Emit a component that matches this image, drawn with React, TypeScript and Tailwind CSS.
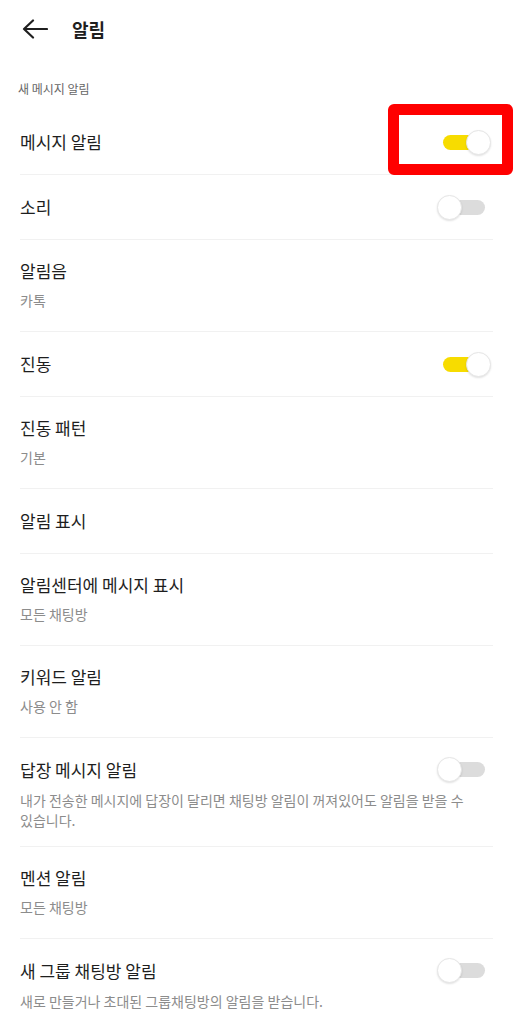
import React from "react";

type Row = {
  title: string;
  sub?: string;
  desc?: string;
  toggle?: "on" | "off";
};

const rows: Row[] = [
  { title: "메시지 알림", toggle: "on" },
  { title: "소리", toggle: "off" },
  { title: "알림음", sub: "카톡" },
  { title: "진동", toggle: "on" },
  { title: "진동 패턴", sub: "기본" },
  { title: "알림 표시" },
  { title: "알림센터에 메시지 표시", sub: "모든 채팅방" },
  { title: "키워드 알림", sub: "사용 안 함" },
  {
    title: "답장 메시지 알림",
    desc: "내가 전송한 메시지에 답장이 달리면 채팅방 알림이 꺼져있어도 알림을 받을 수 있습니다.",
    toggle: "off",
  },
  { title: "멘션 알림", sub: "모든 채팅방" },
  {
    title: "새 그룹 채팅방 알림",
    desc: "새로 만들거나 초대된 그룹채팅방의 알림을 받습니다.",
    toggle: "off",
  },
];

function Toggle({ on }: { on: boolean }) {
  return (
    <div className="relative w-[54px] h-[25px] shrink-0">
      <div
        className={
          on
            ? "absolute left-[6px] right-[6px] top-[5px] h-[15px] rounded-full bg-[#f7dc00]"
            : "absolute left-[6px] right-[6px] top-[5px] h-[15px] rounded-full bg-[#dcdcdc]"
        }
      />
      <div
        className={
          on
            ? "absolute right-0 top-0 w-[25px] h-[25px] rounded-full bg-white border border-[#e6e6e6] shadow-[0_1px_2px_rgba(0,0,0,0.12)]"
            : "absolute left-0 top-0 w-[25px] h-[25px] rounded-full bg-white border border-[#e6e6e6] shadow-[0_1px_2px_rgba(0,0,0,0.12)]"
        }
      />
    </div>
  );
}

function SettingRow({ row, last }: { row: Row; last: boolean }) {
  const single = !row.sub && !row.desc;
  return (
    <div className="px-5">
      <div
        className={
          (last ? "" : "border-b border-[#f1f1f1] ") +
          (single
            ? "h-[65px] flex items-center"
            : row.desc
            ? "relative pt-[21px] pb-[16px] flex items-start"
            : "pt-5 pb-[21px] flex items-start")
        }
      >
        <div className="flex-1 min-w-0">
          <div className="text-[17px] leading-[22px] text-[#1e1e1e]">{row.title}</div>
          {row.sub && (
            <div className="mt-2 text-[14px] leading-[20px] text-[#8c8c8c]">{row.sub}</div>
          )}
          {row.desc && (
            <div className="mt-[9px] text-[14px] leading-[20px] text-[#8c8c8c] break-keep">
              {row.desc}
            </div>
          )}
        </div>
        {row.toggle && (
          <div className={row.desc ? "absolute right-[2px] top-[19px]" : "mr-[2px] ml-3"}>
            <Toggle on={row.toggle === "on"} />
          </div>
        )}
      </div>
    </div>
  );
}

export default function App() {
  return (
    <div
      className="relative w-[513px] h-[1024px] overflow-hidden bg-white"
      style={{ fontFamily: '"Noto Sans CJK KR", "Noto Sans", sans-serif' }}
    >
      <div className="h-[58px] flex items-center pl-[22px]">
        <svg width="26" height="20" viewBox="0 0 26 20" fill="none">
          <path
            d="M25 10H2M11 1.5L2 10L11 18.5"
            stroke="#1f1f1f"
            strokeWidth="2.2"
            strokeLinecap="round"
            strokeLinejoin="round"
          />
        </svg>
        <div className="ml-[24px] text-[18px] font-bold text-[#1e1e1e] leading-[24px]">알림</div>
      </div>
      <div className="pl-[18px] pt-[23px] pb-[13px] text-[12px] leading-4 text-[#666]">
        새 메시지 알림
      </div>
      {rows.map((r, i) => (
        <SettingRow key={i} row={r} last={i === rows.length - 1} />
      ))}
      <div className="absolute left-[388px] top-[104px] w-[125px] h-[71px] border-[11px] border-[#ff0000] rounded-[6px]" />
    </div>
  );
}
